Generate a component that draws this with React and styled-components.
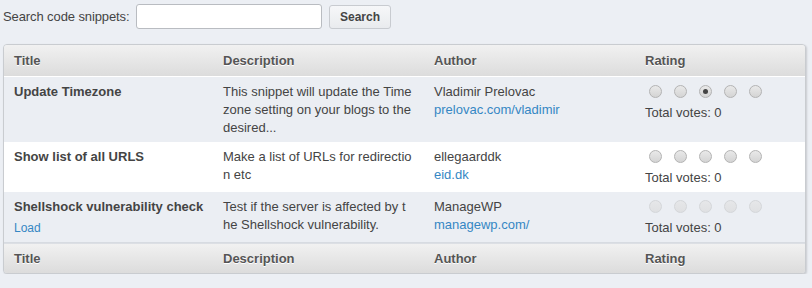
import React from 'react';
import styled, { createGlobalStyle } from 'styled-components';

const GlobalStyle = createGlobalStyle`
	html, body {
		margin: 0;
		padding: 0;
		background: #eceff4;
	}
	body {
		font-family: 'Liberation Sans', Arial, sans-serif;
		font-size: 13px;
		color: #444;
	}
`;

const snippets = [
	{
		title: 'Update Timezone',
		description: 'This snippet will update the Time zone setting on your blogs to the desired...',
		author: 'Vladimir Prelovac',
		site: 'prelovac.com/vladimir',
		rating: 3,
	},
	{
		title: 'Show list of all URLS',
		description: 'Make a list of URLs for redirection etc',
		author: 'ellegaarddk',
		site: 'eid.dk',
		rating: 0,
	},
	{
		title: 'Shellshock vulnerability check',
		description: 'Test if the server is affected by the Shellshock vulnerability.',
		author: 'ManageWP',
		site: 'managewp.com/',
		rating: 0,
		load: true,
		disabled: true,
	},
];

const Rating = ({ value, disabled }) => (
	<RatingCell>
		<Stars>
			{[1, 2, 3, 4, 5].map((n) => (
				<Radio key={n} $checked={n === value} $disabled={disabled} />
			))}
		</Stars>
		<Votes>Total votes: 0</Votes>
	</RatingCell>
);

const HeadRow = () => (
	<tr>
		<Th>Title</Th>
		<Th>Description</Th>
		<Th>Author</Th>
		<Th>Rating</Th>
	</tr>
);

const App = () => {
	return (
		<>
			<GlobalStyle />
			<Page>
				<Toolbar>
					<Label>Search code snippets:</Label>
					<SearchInput type='text' />
					<Button>Search</Button>
				</Toolbar>
				<Table>
					<colgroup>
						<col style={{ width: 209 }} />
						<col style={{ width: 211 }} />
						<col style={{ width: 211 }} />
						<col />
					</colgroup>
					<thead>
						<HeadRow />
					</thead>
					<tbody>
						{snippets.map((s, i) => (
							<Row key={s.title} $odd={i % 2 === 1}>
								<Td>
									<Title>{s.title}</Title>
									{s.load && <LoadLink href='#'>Load</LoadLink>}
								</Td>
								<Td>
									<Description>{s.description}</Description>
								</Td>
								<Td>
									<div>{s.author}</div>
									<Link href='#'>{s.site}</Link>
								</Td>
								<Td>
									<Rating value={s.rating} disabled={s.disabled} />
								</Td>
							</Row>
						))}
					</tbody>
					<tfoot>
						<HeadRow />
					</tfoot>
				</Table>
			</Page>
		</>
	);
};

export default App;

const Page = styled.div`
	padding: 4px 6px 0 3px;
	width: 812px;
	box-sizing: border-box;
`;
const Toolbar = styled.div`
	display: flex;
	align-items: center;
	height: 25px;
	margin-bottom: 15px;
`;
const Label = styled.label`
	color: #444;
	white-space: nowrap;
	width: 127px;
	margin-right: 6px;
	letter-spacing: -0.1px;
`;
const SearchInput = styled.input`
	width: 186px;
	height: 25px;
	box-sizing: border-box;
	border: 1px solid #b9bcc1;
	border-radius: 3px;
	background: #fff;
	outline: none;
	padding: 2px 5px;
	font-family: inherit;
	font-size: 13px;
`;
const Button = styled.button`
	width: 62px;
	height: 24px;
	margin-left: 7px;
	border: 1px solid #c8cbd0;
	border-radius: 3px;
	background: linear-gradient(#f6f7f9, #e9ebee);
	font-family: 'Liberation Sans', Arial, sans-serif;
	font-size: 12px;
	font-weight: bold;
	color: #444;
	cursor: pointer;
`;
const Table = styled.table`
	width: 803px;
	table-layout: fixed;
	border-collapse: separate;
	border-spacing: 0;
	border: 1px solid #c9ccd0;
	border-radius: 4px;
	box-shadow: 1px 1px 2px rgba(0, 0, 0, 0.15);
	overflow: hidden;
	background: #ebeef3;
`;
const Th = styled.th`
	height: 31px;
	padding: 0 10px;
	text-align: left;
	font-size: 13px;
	font-weight: bold;
	color: #555;
	text-shadow: 0 1px 0 #fff;
	background: linear-gradient(#f1f1f1, #dcdcdc);
	thead & {
		border-bottom: 1px solid #fff;
	}
	tfoot & {
		height: 29px;
		border-top: 1px solid #dcdfe4;
	}
`;
const Row = styled.tr`
	background: ${(p) => (p.$odd ? '#fff' : '#ebeef3')};
	& + & td {
		border-top: 1px solid #dde1e7;
	}
`;
const Td = styled.td`
	padding: 6px 10px 5px;
	vertical-align: top;
	line-height: 18px;
	color: #444;
	tbody tr:last-child & {
		border-bottom: 1px solid #d7dbe1;
	}
`;
const Title = styled.div`
	font-weight: bold;
	white-space: nowrap;
	height: 21px;
	line-height: 18px;
`;
const Description = styled.div`
	word-break: break-all;
	max-width: 189px;
`;
const Link = styled.a`
	color: #3587c4;
	text-decoration: none;
`;
const LoadLink = styled(Link)`
	font-size: 12px;
	display: block;
	line-height: 18px;
`;
const RatingCell = styled.div`
	display: flex;
	flex-direction: column;
`;
const Stars = styled.div`
	display: flex;
	gap: 12px;
	height: 21px;
	align-items: flex-start;
	padding-top: 2px;
	box-sizing: border-box;
	margin-left: 4px;
`;
const Radio = styled.span`
	width: 13px;
	height: 13px;
	box-sizing: border-box;
	border-radius: 50%;
	border: 1px solid ${(p) => (p.$disabled ? '#d4d6d9' : '#b3b3b3')};
	background: ${(p) =>
		p.$disabled
			? 'linear-gradient(#e6e7e9, #dfe0e2)'
			: 'linear-gradient(#e9e9e9, #d4d4d4)'};
	display: flex;
	align-items: center;
	justify-content: center;
	&::after {
		content: '';
		display: ${(p) => (p.$checked ? 'block' : 'none')};
		width: 5px;
		height: 5px;
		border-radius: 50%;
		background: #444;
	}
`;
const Votes = styled.div`
	line-height: 18px;
`;
